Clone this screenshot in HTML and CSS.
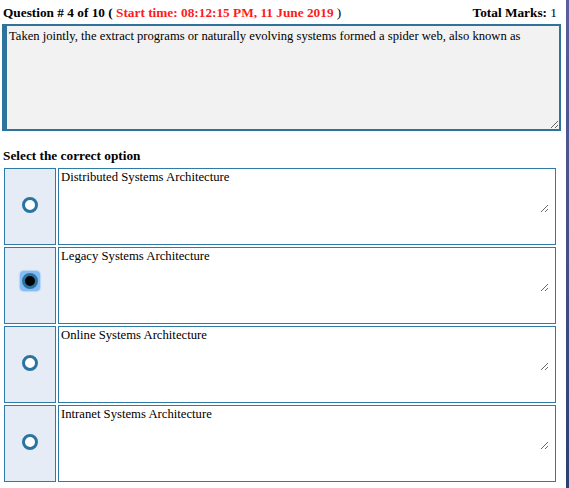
FILE: index.html
```html
<!DOCTYPE html>
<html lang="en">
<head>
    <meta charset="UTF-8">
    <meta name="viewport" content="width=device-width, initial-scale=1.0">
    <title>Quiz</title>
    <link rel="stylesheet" href="styles.css">
</head>
<body>
    <div class="page">
        <div class="quiz-head">
            <div class="q-title">
                <b>Question # 4 of 10 (</b>
                <b class="start">Start time: 08:12:15 PM, 11 June 2019</b> )
            </div>
            <div class="marks"><b>Total Marks:</b> 1</div>
        </div>

        <textarea class="question" readonly>Taken jointly, the extract programs or naturally evolving systems formed a spider web, also known as</textarea>

        <div class="select-label">Select the correct option</div>

        <div class="options">
            <div class="option">
                <label class="pick"><input type="radio" name="answer"></label>
                <div class="answer-cell"><textarea class="answer" readonly>Distributed Systems Architecture</textarea></div>
            </div>
            <div class="option">
                <label class="pick"><span class="focus-ring"><input type="radio" name="answer" checked></span></label>
                <div class="answer-cell"><textarea class="answer" readonly>Legacy Systems Architecture</textarea></div>
            </div>
            <div class="option">
                <label class="pick"><input type="radio" name="answer"></label>
                <div class="answer-cell"><textarea class="answer" readonly>Online Systems Architecture</textarea></div>
            </div>
            <div class="option">
                <label class="pick"><input type="radio" name="answer"></label>
                <div class="answer-cell"><textarea class="answer" readonly>Intranet Systems Architecture</textarea></div>
            </div>
        </div>
    </div>
</body>
</html>
```

FILE: styles.css
```css
html {
    background: linear-gradient(#5a5f9a, #2f3f6e);
    height: 100%;
}
body {
    margin: 0;
    font-family: "Liberation Serif", "Times New Roman", serif;
    color: #000;
}
.page {
    width: 566px;
    height: 488px;
    background: #fff;
    overflow: hidden;
}
.quiz-head {
    display: flex;
    justify-content: space-between;
    padding: 5px 9px 0 3px;
    height: 19px;
    font-size: 13.3px;
}
.start {
    color: #ff1a1a;
}
.question {
    display: block;
    margin: 0 0 0 2px;
    width: 559px;
    height: 107px;
    box-sizing: border-box;
    background: #f2f2f2;
    border: 2px solid #2f729b;
    border-left-width: 5px;
    padding: 3px 2px;
    font-family: "Liberation Serif", "Times New Roman", serif;
    font-size: 12.6px;
    resize: vertical;
    outline: none;
}
.select-label {
    font-weight: bold;
    font-size: 13.3px;
    padding: 17px 0 0 3px;
    height: 20px;
}
.options {
    display: flex;
    flex-direction: column;
    gap: 2px;
    padding-left: 4px;
}
.option {
    display: flex;
    gap: 2px;
    height: 77px;
}
.pick {
    width: 52px;
    box-sizing: border-box;
    background: #e5ecf6;
    border: 1.5px solid #2e7aa8;
    display: flex;
    align-items: center;
    justify-content: center;
    padding-bottom: 4px;
}
.pick input {
    appearance: none;
    -webkit-appearance: none;
    margin: 0;
    width: 16px;
    height: 16px;
    border-radius: 50%;
    border: 3.5px solid #2b74a1;
    background: #fff;
    box-sizing: border-box;
}
.pick input:checked {
    background: #000;
}
.focus-ring {
    display: flex;
    padding: 2px;
    margin-bottom: 6px;
    border-radius: 4px;
    background: #86bbf4;
    box-shadow: 0 0 1px 1px #b7d6f8;
}
.answer-cell {
    width: 498px;
    box-sizing: border-box;
    border: 1.5px solid #2e7aa8;
    background: #fff;
}
.answer {
    display: block;
    width: 490px;
    height: 44px;
    margin: 0;
    box-sizing: border-box;
    border: none;
    padding: 1px 2px;
    font-family: "Liberation Serif", "Times New Roman", serif;
    font-size: 12.7px;
    resize: vertical;
    outline: none;
    background: #fff;
}
```
